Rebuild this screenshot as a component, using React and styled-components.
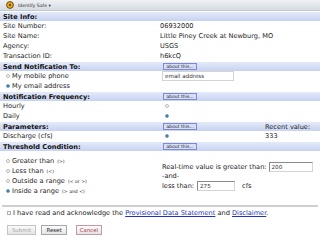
import React from "react";
import styled, { createGlobalStyle } from "styled-components";

const GlobalStyle = createGlobalStyle`
  html, body {
    margin: 0;
    padding: 0;
    background: #fff;
  }
  body {
    font-family: "DejaVu Sans", Verdana, sans-serif;
    font-size: 6.6px;
    color: #222;
  }
`;

const COLS = "160px 105px 1fr";

const Page = styled.div`
  width: 320px;
  height: 240px;
  overflow: hidden;
`;

const TopBar = styled.div`
  height: 10px;
  display: flex;
  align-items: center;
  gap: 4px;
  padding-left: 6px;
  background: linear-gradient(#eef1f5, #d6dce4);
  border-bottom: 1px solid #c2c9d2;
  font-size: 4.6px;
  color: #333;
`;

const Header = styled.div`
  display: grid;
  grid-template-columns: ${COLS};
  align-items: center;
  height: 9px;
  margin-top: 1px;
  background: linear-gradient(#e4eaf9, #c6d2f1);
`;

const HeaderTitle = styled.span`
  font-weight: bold;
  padding-left: 3px;
  color: #111;
`;

const Row = styled.div`
  display: grid;
  grid-template-columns: ${COLS};
  align-items: center;
  height: ${(p) => p.$h || 10}px;
`;

const Label = styled.span`
  padding-left: ${(p) => (p.$indent ? 6 : 3)}px;
  display: flex;
  align-items: center;
  gap: 2px;
`;

const Value = styled.span`
  display: flex;
  align-items: center;
  white-space: nowrap;
`;

const About = styled.span`
  display: inline-flex;
  align-items: center;
  justify-content: center;
  width: 34px;
  height: 7px;
  margin-left: 3px;
  box-sizing: border-box;
  background: #d6def8;
  border: 1px solid #7d89d6;
  font-size: 4.6px;
  color: #222;
`;

const Radio = styled.span`
  display: inline-block;
  flex-shrink: 0;
  width: 4px;
  height: 4px;
  border-radius: 50%;
  box-sizing: border-box;
  border: 1px solid ${(p) => (p.$on ? "#7aa7c8" : "#b8b8b8")};
  background: ${(p) => (p.$on ? "#2f6f9f" : "#fff")};
  margin-left: ${(p) => p.$ml || 0}px;
`;

const Small = styled.span`
  font-size: 4.6px;
  margin-left: 1px;
`;

const TextBox = styled.span`
  display: inline-flex;
  flex-shrink: 0;
  align-items: center;
  box-sizing: border-box;
  width: ${(p) => p.$w}px;
  height: ${(p) => p.$h || 10}px;
  padding-left: 2px;
  background: #fff;
  border: 1px solid #d4d4d4;
  border-top-color: ${(p) => (p.$inset ? "#8a8a8a" : "#d4d4d4")};
  border-left-color: ${(p) => (p.$inset ? "#8a8a8a" : "#d4d4d4")};
  margin-left: ${(p) => p.$ml || 0}px;
  font-size: 5.6px;
  color: #333;
`;

const Threshold = styled.div`
  display: grid;
  grid-template-columns: 160px 160px;
  align-items: center;
  padding: 5px 0 5px;
`;

const RadioList = styled.div`
  display: flex;
  flex-direction: column;
`;

const RadioItem = styled.div`
  height: 10px;
  display: flex;
  align-items: center;
  gap: 2px;
  padding-left: 6px;
`;

const Ranges = styled.div`
  display: flex;
  flex-direction: column;
  padding-left: 2px;
`;

const RangeLine = styled.div`
  display: flex;
  align-items: center;
  white-space: nowrap;
  height: ${(p) => p.$h || 10}px;
`;

const Unit = styled.span`
  margin-left: 7px;
`;

const Rule = styled.hr`
  margin: 4px 2px 0;
  border: none;
  height: 2px;
  background: #cfcfcf;
`;

const Agree = styled.div`
  display: flex;
  align-items: center;
  gap: 2px;
  padding: 1px 0 0 7px;
  height: 10px;
  white-space: nowrap;
`;

const Check = styled.span`
  display: inline-block;
  width: 4px;
  height: 4px;
  box-sizing: border-box;
  border: 1px solid #b0b0b0;
  background: #f4f4f4;
`;

const Link = styled.a`
  color: #2233bb;
  text-decoration: underline;
`;

const Buttons = styled.div`
  display: flex;
  align-items: center;
  padding: 7px 0 0 7px;
`;

const Btn = styled.span`
  display: inline-flex;
  align-items: center;
  justify-content: center;
  box-sizing: border-box;
  width: ${(p) => p.$w}px;
  height: 10px;
  margin-right: ${(p) => p.$mr || 0}px;
  background: linear-gradient(#fbfbfb, #e4e4e4);
  border: 1px solid ${(p) => p.$border || "#a8a8a8"};
  color: ${(p) => p.$color || "#222"};
  font-size: 5.4px;
`;

const Logo = () => (
  <svg width="8" height="8" viewBox="0 0 8 8">
    <circle cx="4" cy="4" r="3.4" fill="#f2b21c" stroke="#5a3b00" strokeWidth="0.9" />
    <circle cx="4" cy="4" r="1.3" fill="#7a4a00" />
  </svg>
);

export default function App() {
  return (
    <Page>
      <GlobalStyle />
      <TopBar>
        <Logo />
        <span>Identify Safe ▾</span>
      </TopBar>

      <Header>
        <HeaderTitle>Site Info:</HeaderTitle>
      </Header>
      <Row>
        <Label>Site Number:</Label>
        <Value>06932000</Value>
      </Row>
      <Row>
        <Label>Site Name:</Label>
        <Value>Little Piney Creek at Newburg, MO</Value>
      </Row>
      <Row>
        <Label>Agency:</Label>
        <Value>USGS</Value>
      </Row>
      <Row>
        <Label>Transaction ID:</Label>
        <Value>h6kcQ</Value>
      </Row>

      <Header>
        <HeaderTitle>Send Notification To:</HeaderTitle>
        <About>about this...</About>
      </Header>
      <Row>
        <Label $indent>
          <Radio />
          My mobile phone
        </Label>
        <Value>
          <TextBox $w={72} $h={10} $ml={2}>email address</TextBox>
        </Value>
      </Row>
      <Row>
        <Label $indent>
          <Radio $on />
          My email address
        </Label>
      </Row>

      <Header>
        <HeaderTitle>Notification Frequency:</HeaderTitle>
        <About>about this...</About>
      </Header>
      <Row>
        <Label>Hourly</Label>
        <Value>
          <Radio $ml={5} />
        </Value>
      </Row>
      <Row>
        <Label>Daily</Label>
        <Value>
          <Radio $on $ml={5} />
        </Value>
      </Row>

      <Header>
        <HeaderTitle>Parameters:</HeaderTitle>
        <About>about this...</About>
        <span>Recent value:</span>
      </Header>
      <Row>
        <Label>Discharge (cfs)</Label>
        <Value>
          <Radio $on $ml={5} />
        </Value>
        <span>333</span>
      </Row>

      <Header>
        <HeaderTitle>Threshold Condition:</HeaderTitle>
        <About>about this...</About>
      </Header>
      <Threshold>
        <RadioList>
          <RadioItem>
            <Radio />
            Greater than<Small>(&gt;)</Small>
          </RadioItem>
          <RadioItem>
            <Radio />
            Less than<Small>(&lt;)</Small>
          </RadioItem>
          <RadioItem>
            <Radio />
            Outside a range<Small>(&lt; or &gt;)</Small>
          </RadioItem>
          <RadioItem>
            <Radio $on />
            Inside a range<Small>(&gt; and &lt;)</Small>
          </RadioItem>
        </RadioList>
        <Ranges>
          <RangeLine $h={11}>
            Real-time value is greater than:
            <TextBox $inset $w={44} $ml={2}>200</TextBox>
          </RangeLine>
          <RangeLine $h={8}>-and-</RangeLine>
          <RangeLine $h={11}>
            less than:
            <TextBox $inset $w={38} $ml={3}>275</TextBox>
            <Unit>cfs</Unit>
          </RangeLine>
        </Ranges>
      </Threshold>

      <Rule />

      <Agree>
        <Check />
        <span>
          I have read and acknowledge the <Link>Provisional Data Statement</Link> and{" "}
          <Link>Disclaimer</Link>.
        </span>
      </Agree>

      <Buttons>
        <Btn $w={29} $mr={5} $color="#a8a8a8" $border="#c4c4c4">Submit</Btn>
        <Btn $w={26} $mr={9}>Reset</Btn>
        <Btn $w={26} $color="#b2334f" $border="#c49aa6">Cancel</Btn>
      </Buttons>
    </Page>
  );
}
